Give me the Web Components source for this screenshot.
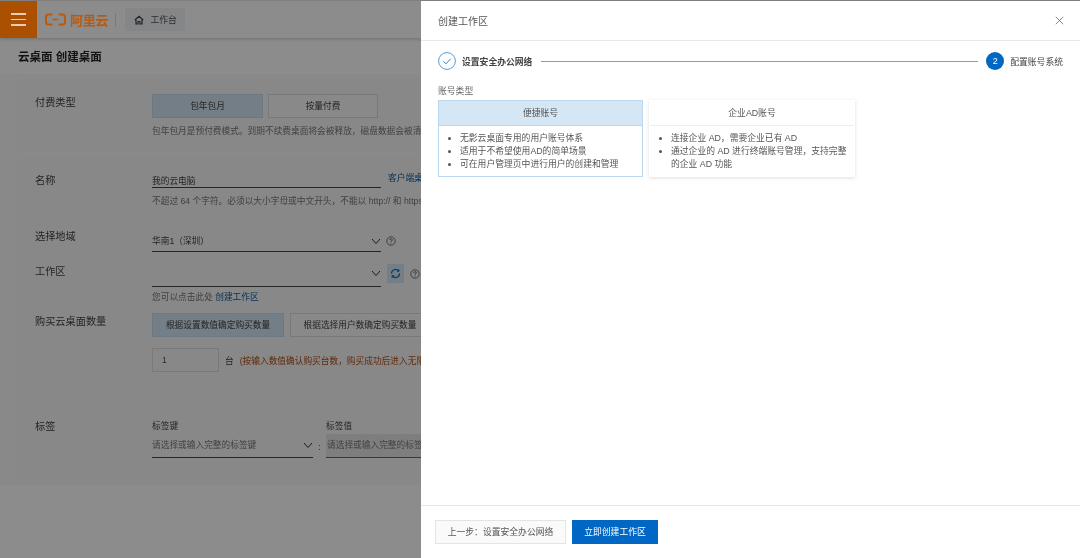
<!DOCTYPE html>
<html lang="zh">
<head>
<meta charset="utf-8">
<title>创建工作区</title>
<style>
  html, body { margin: 0; height: 100%; }
  body {
    width: 1080px;
    height: 558px;
    overflow: hidden;
    font-family: "Liberation Sans", "Noto Sans CJK SC", sans-serif;
    color: #333;
    background: #fff;
    filter: blur(.3px);
  }
</style>
</head>
<body>
<console-app>
  <console-topbar slot="top"></console-topbar>
  <form-section style="--h:73px; --pt:15px; --mt:5px">
    <form-row label="付费类型">
      <choice-group>
        <choice-button w="111" selected>包年包月</choice-button>
        <choice-button w="110">按量付费</choice-button>
      </choice-group>
      <help-text style="margin-top:7px">包年包月是预付费模式。到期不续费桌面将会被释放，磁盘数据会被清除</help-text>
    </form-row>
  </form-section>
  <form-section style="--h:245px; --pt:9px">
    <form-row label="名称" style="--lt:8px">
      <div style="display:flex; gap:7px; align-items:flex-end">
        <line-field w="229" value="我的云电脑" style="padding-top:8px"></line-field>
        <span style="color:#0a5a9c; font-size:8.7px; line-height:12px; white-space:nowrap; padding-bottom:4px">客户端桌面</span>
      </div>
      <help-text style="margin-top:7px">不超过 64 个字符。必须以大小字母或中文开头，不能以 http:// 和 https:// 开头</help-text>
    </form-row>
    <form-row label="选择地域" style="margin-top:23px; --lt:0px">
      <div style="display:flex; gap:5px; align-items:center">
        <line-field w="229" value="华南1（深圳）" arrow></line-field>
        <help-icon></help-icon>
      </div>
    </form-row>
    <form-row label="工作区" style="margin-top:8px; --lt:5px">
      <div style="display:flex; gap:6px; align-items:center">
        <line-field w="229" arrow style="--fh:27px"></line-field>
        <refresh-button></refresh-button>
        <help-icon></help-icon>
      </div>
      <help-text style="margin-top:4px">您可以点击此处 <a style="color:#0a5a9c">创建工作区</a></help-text>
    </form-row>
    <form-row label="购买云桌面数量" style="margin-top:10px">
      <choice-group style="--gap:6px">
        <choice-button w="132" selected>根据设置数值确定购买数量</choice-button>
        <choice-button w="140">根据选择用户数确定购买数量</choice-button>
      </choice-group>
      <div style="display:flex; align-items:center; gap:6px; margin-top:11px; font-size:8.7px; white-space:nowrap">
        <number-box>1</number-box>
        <span>台</span>
        <span style="color:#b04a12">(按输入数值确认购买台数，购买成功后进入无限制)</span>
      </div>
    </form-row>
  </form-section>
  <form-section style="--h:83px; --pt:16px; --mt:0px">
    <form-row label="标签">
      <div style="display:flex">
        <tag-field w="161" title="标签键" arrow>请选择或输入完整的标签键</tag-field>
        <span style="width:13px; text-align:center; font-size:9px; padding-top:24px">:</span>
        <tag-field w="150" title="标签值" disabled>请选择或输入完整的标签值</tag-field>
      </div>
    </form-row>
  </form-section>
</console-app>

<side-drawer heading="创建工作区">
  <step-bar></step-bar>
  <div style="font-size:8.8px; line-height:10px; color:#666; margin:16px 0 4px">账号类型</div>
  <div style="display:flex; gap:6px; align-items:flex-start">
    <account-card heading="便捷账号" selected>
      <li>无影云桌面专用的用户账号体系</li>
      <li>适用于不希望使用AD的简单场景</li>
      <li>可在用户管理页中进行用户的创建和管理</li>
    </account-card>
    <account-card heading="企业AD账号">
      <li>连接企业 AD，需要企业已有 AD</li>
      <li>通过企业的 AD 进行终端账号管理，支持完整的企业 AD 功能</li>
    </account-card>
  </div>
  <div slot="footer" style="display:flex; gap:6px">
    <drawer-button style="width:131px">上一步：设置安全办公网络</drawer-button>
    <drawer-button primary style="width:86px">立即创建工作区</drawer-button>
  </div>
</side-drawer>

<script>
function define(name, css, html, setup) {
  customElements.define(name, class extends HTMLElement {
    connectedCallback() {
      if (this.shadowRoot) return;
      this.attachShadow({ mode: 'open' });
      const get = (a, d = '') => this.getAttribute(a) ?? d;
      this.shadowRoot.innerHTML = `<style>${css}</style>` + (typeof html === 'function' ? html(get, this) : html);
      if (setup) setup(this, get);
    }
  });
}

const chevron = `<svg width="10" height="10" viewBox="0 0 10 10" fill="none" stroke="#333" stroke-width="1"><path d="M1 3l4 4.5L9 3"/></svg>`;

define('console-app', `
  :host { display: block; width: 1080px; height: 558px; overflow: hidden; background: #fff; border-top: 1px solid #e8e8e8; box-sizing: border-box; }
  .head { padding: 12px 0 0 18px; height: 36px; font-size: 11.5px; line-height: 14px; font-weight: 700; color: #222; box-sizing: border-box; }
  .body { padding: 0 0 0 18px; background: #f9f9f9; height: 411px; box-sizing: border-box; overflow: hidden; }
`, `<slot name="top"></slot><div class="head">云桌面 创建桌面</div><div class="body"><slot></slot></div>`);

define('console-topbar', `
  :host { display: flex; align-items: center; height: 37px; background: #fff; box-shadow: 0 1px 4px rgba(0,0,0,.22); position: relative; }
  .menu { position: relative; z-index: 2; width: 37px; height: 37px; background: #ab5000; display: flex; flex-direction: column; gap: 4px; align-items: center; justify-content: center; }
  .menu i { display: block; width: 15px; height: 1.5px; background: #e8cdb4; }
  .logo { position: relative; z-index: 2; display: flex; align-items: center; gap: 4px; margin-left: 8px; color: #b85a10; font-size: 13px; font-weight: 700; letter-spacing: -.2px; }
  .sep { width: 1px; height: 14px; background: #ddd; margin: 0 9px 0 7px; }
  .tab { display: flex; align-items: center; gap: 6px; width: 60px; height: 23px; background: #f3f4f6; padding-left: 9px; box-sizing: border-box; font-size: 8.8px; color: #555; }
`, `<div class="menu"><i></i><i></i><i></i></div>
  <div class="logo"><svg width="21" height="13" viewBox="0 0 21 13" fill="none" stroke="#b85a10" stroke-width="2"><path d="M7.500 1.500H3.500Q1 1.500 1 4v5q0 2.500 2.500 2.500h4M13.500 1.500h4Q20 1.500 20 4v5q0 2.500-2.500 2.500h-4"/><path d="M7.500 6.500h6" stroke-width="1.500"/></svg><span>阿里云</span></div>
  <div class="sep"></div>
  <div class="tab"><svg width="10" height="10" viewBox="0 0 10 10" fill="none" stroke="#444" stroke-width="1.200"><path d="M.8 5L5 1.200 9.200 5M2 4.500V9h2V6.500h2V9h2V4.500"/></svg><span>工作台</span></div>`);

define('form-section', `
  :host { display: block; height: var(--h); padding: var(--pt) 0 0 17px; margin-top: var(--mt, 5px); box-sizing: border-box; background: #f7f7f7; }
`, `<slot></slot>`);

define('form-row', `
  :host { display: grid; grid-template-columns: 117px 1fr; font-size: 10.2px; color: #444; }
  .label { line-height: 14px; margin-top: var(--lt, 2px); white-space: nowrap; }
  .content { min-width: 0; white-space: nowrap; }
`, (get) => `<div class="label">${get('label')}</div><div class="content"><slot></slot></div>`);

define('choice-group', `:host { display: flex; gap: var(--gap, 5px); }`, `<slot></slot>`);

define('choice-button', `
  :host { display: block; flex: none; height: 24px; box-sizing: border-box; border: 1px solid #ddd; background: #f9f9f9; color: #444; font-size: 8.7px; line-height: 22px; text-align: center; white-space: nowrap; }
  :host([selected]) { background: #d3e5f4; border-color: #c4dcf0; }
`, `<slot></slot>`, (el, get) => { el.style.width = get('w') + 'px'; });

define('help-text', `:host { display: block; font-size: 8.7px; line-height: 12px; color: #777; white-space: nowrap; }`, `<slot></slot>`);

define('line-field', `
  :host { display: flex; flex: none; align-items: center; justify-content: space-between; height: var(--fh, 22px); border-bottom: 1px solid #444; box-sizing: border-box; font-size: 8.7px; color: #444; }
  svg { display: block; }
`, (get) => `<span>${get('value')}</span>${get('arrow', null) !== null ? chevron : ''}`, (el, get) => { el.style.width = get('w') + 'px'; });

define('help-icon', `
  :host { display: flex; flex: none; align-items: center; justify-content: center; width: 10px; height: 10px; }
`, `<svg width="10" height="10" viewBox="0 0 10 10" fill="none" stroke="#555" stroke-width=".8"><circle cx="5" cy="5" r="4.200"/><path d="M3.600 4Q3.700 2.700 5 2.700T6.400 3.900Q6.400 4.600 5 5.300V6"/><path d="M5 6.800v.8"/></svg>`);

define('refresh-button', `
  :host { display: flex; flex: none; align-items: center; justify-content: center; width: 17px; height: 19px; background: #d3e5f4; }
`, `<svg width="11" height="11" viewBox="0 0 11 11" fill="none" stroke="#0a6fc4" stroke-width="1.200"><path d="M1.500 5.500A4 4 0 0 1 8.600 3M9.500 5.500A4 4 0 0 1 2.400 8"/><path d="M8.900 1.200V3.300H6.800M2.100 9.800V7.700H4.200" stroke-width="1"/></svg>`);

define('number-box', `
  :host { display: block; width: 67px; height: 24px; border: 1px solid #ddd; background: #f7f7f7; box-sizing: border-box; padding-left: 9px; line-height: 22px; color: #555; font-size: 8.7px; }
`, `<slot></slot>`);

define('tag-field', `
  :host { display: block; flex: none; font-size: 8.7px; color: #444; }
  .title { line-height: 12px; margin-bottom: 2px; margin-top: 2px; }
  .box { display: flex; align-items: center; justify-content: space-between; height: 24px; box-sizing: border-box; padding-bottom: 2px; border-bottom: 1px solid #444; color: #777; white-space: nowrap; overflow: hidden; }
  :host([disabled]) .box { background: #e6e6e6; padding-left: 1px; border-bottom-color: #666; }
`, (get) => `<div class="title">${get('title')}</div><div class="box"><span><slot></slot></span>${get('arrow', null) !== null ? chevron : ''}</div>`,
  (el, get) => { el.style.width = get('w') + 'px'; });

define('side-drawer', `
  :host { position: fixed; inset: 0; display: block; background: rgba(0,0,0,.45); }
  .panel { position: absolute; top: 1px; right: 0; bottom: 0; width: 659px; background: #fff; display: flex; flex-direction: column; }
  header { flex: none; display: flex; align-items: center; justify-content: space-between; height: 40px; box-sizing: border-box; border-bottom: 1px solid #e8e8e8; padding: 0 16px 0 17px; font-size: 10px; color: #555; }
  main { flex: 1; padding: 11px 17px 0; min-height: 0; }
  footer { flex: none; height: 53px; border-top: 1px solid #e8e8e8; box-sizing: border-box; padding: 14px 14px 0; }
  svg { display: block; }
`, (get) => `<div class="panel">
    <header><span>${get('heading')}</span><svg width="9" height="9" viewBox="0 0 9 9" stroke="#777" stroke-width=".9"><path d="M.8.8l7.400 7.400M8.200.8L.8 8.200"/></svg></header>
    <main><slot></slot></main>
    <footer><slot name="footer"></slot></footer>
  </div>`);

define('step-bar', `
  :host { display: flex; align-items: center; height: 18px; font-size: 8.8px; color: #444; white-space: nowrap; }
  .done { width: 18px; height: 18px; margin-right: 6px; flex: none; }
  b { font-weight: 700; }
  .line { flex: 1; height: 1px; background: #5aa8ee; margin: 0 8px 0 9px; }
  .num { width: 18px; height: 18px; border-radius: 50%; background: #0068c4; color: #fff; font-size: 9px; line-height: 18px; text-align: center; margin-right: 6px; flex: none; }
`, `<svg class="done" viewBox="0 0 18 18" fill="none" stroke="#4f9fe0"><circle cx="9" cy="9" r="8.400"/><path d="M5.500 9.300l2.500 2.500 4.700-5" stroke="#2f86d0" stroke-width="1"/></svg>
  <b>设置安全办公网络</b><div class="line"></div><div class="num">2</div><span>配置账号系统</span>`);

define('account-card', `
  :host { display: block; width: 206px; box-sizing: border-box; background: #fff; border: 1px solid transparent; box-shadow: 0 1px 4px rgba(0,0,0,.13); font-size: 8.8px; color: #555; }
  :host([selected]) { width: 205px; border-color: #bcd8f0; box-shadow: none; }
  .title { height: 24px; line-height: 24px; text-align: center; border-bottom: 1px solid #eee; box-sizing: content-box; }
  :host([selected]) .title { background: #d5e7f5; border-bottom-color: #bcd8f0; }
  ul { margin: 0; padding: 6px 4px 5px 21px; line-height: 13px; min-height: 39px; }
  ::slotted(li) { padding: 0; }
`, (get) => `<div class="title">${get('heading')}</div><ul><slot></slot></ul>`);

define('drawer-button', `
  :host { display: block; flex: none; height: 24px; line-height: 22px; box-sizing: border-box; text-align: center; background: #fafafa; border: 1px solid #e4e4e4; color: #555; font-size: 8.8px; white-space: nowrap; }
  :host([primary]) { background: #0068c4; border-color: #0068c4; color: #fff; }
`, `<slot></slot>`);
</script>
</body>
</html>
